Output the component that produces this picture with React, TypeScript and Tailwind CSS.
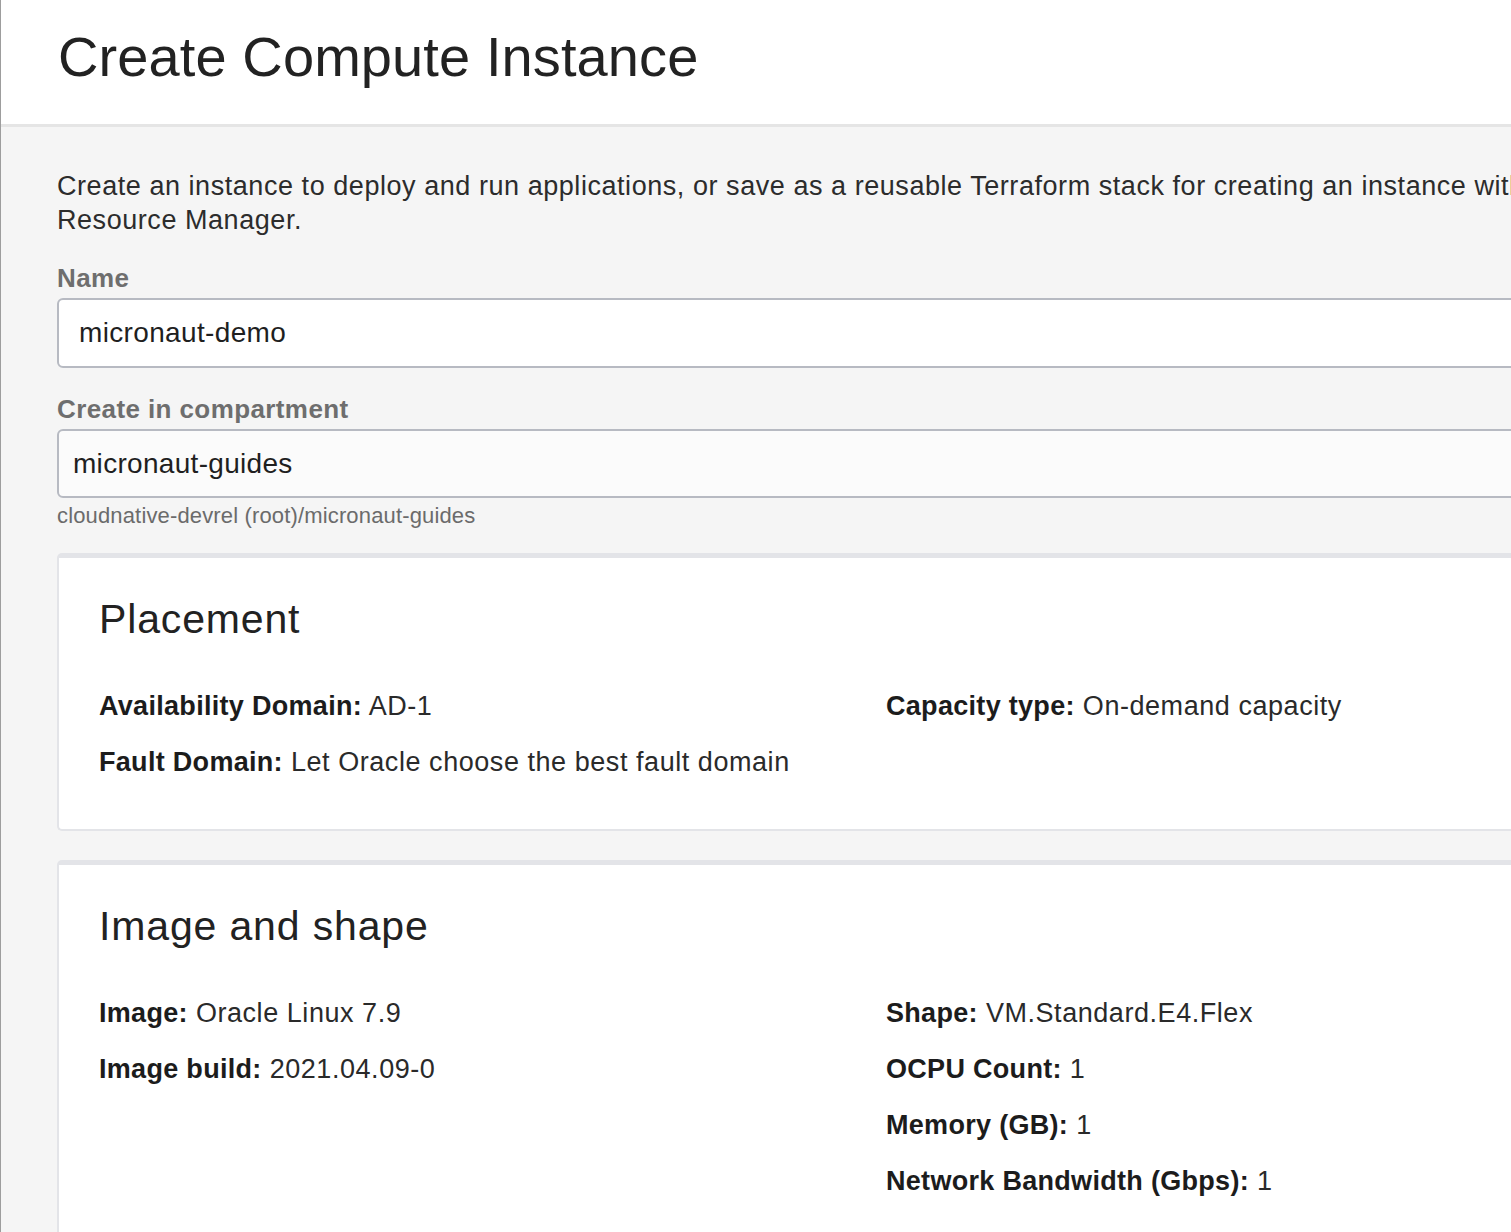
type Field = { label: string; value: string };

const placementLeft: Field[] = [
  { label: "Availability Domain:", value: "AD-1" },
  { label: "Fault Domain:", value: "Let Oracle choose the best fault domain" },
];
const placementRight: Field[] = [{ label: "Capacity type:", value: "On-demand capacity" }];

const imageLeft: Field[] = [
  { label: "Image:", value: "Oracle Linux 7.9" },
  { label: "Image build:", value: "2021.04.09-0" },
];
const imageRight: Field[] = [
  { label: "Shape:", value: "VM.Standard.E4.Flex" },
  { label: "OCPU Count:", value: "1" },
  { label: "Memory (GB):", value: "1" },
  { label: "Network Bandwidth (Gbps):", value: "1" },
];

function FieldList({ items }: { items: Field[] }) {
  return (
    <div className="flex flex-col gap-[22px]">
      {items.map((f) => (
        <div
          key={f.label}
          className="text-[27px] leading-[34px] tracking-[0.55px] text-[#2a2a2a] whitespace-nowrap"
        >
          <span className="font-bold text-[#1c1c1c] tracking-[0.3px]">{f.label}</span> {f.value}
        </div>
      ))}
    </div>
  );
}

function SummaryCard({ title, left, right }: { title: string; left: Field[]; right: Field[] }) {
  return (
    <section className="bg-white border-t-[5px] border-l-2 border-b-2 border-[#e3e4e8] rounded-[5px] pl-[40px] pt-[41px] pb-[50px]">
      <h2 className="text-[41px] leading-none tracking-[0.85px] text-[#222]">{title}</h2>
      <div className="mt-[49px] grid grid-cols-[787px_1fr]">
        <FieldList items={left} />
        <FieldList items={right} />
      </div>
    </section>
  );
}

export default function App() {
  return (
    <div className="min-h-screen overflow-hidden bg-[#f5f5f5] border-l border-[#9d9d9d] font-['Liberation_Sans',Arial,sans-serif]">
      <header className="h-[127px] bg-white border-b-[3px] border-[#e5e5e5] pl-[57px] pt-[29px]">
        <h1 className="text-[56px] leading-none tracking-[0.1px] text-[#222]">Create Compute Instance</h1>
      </header>

      <main className="w-[1700px] pl-[56px] pb-10">
        <p className="mt-[42px] text-[27px] leading-[34px] tracking-[0.55px] text-[#2c2c2c] whitespace-nowrap">
          Create an instance to deploy and run applications, or save as a reusable Terraform stack for creating an instance with
          <br />
          Resource Manager.
        </p>

        <label className="block mt-[25px] text-[26px] leading-[32px] tracking-[0.4px] font-bold text-[#6e6e6e]">
          Name
        </label>
        <div className="mt-[4px] h-[70px] flex items-center bg-white border-2 border-[#b7bac2] rounded-[6px] pl-[20px] text-[28px] tracking-[0.35px] text-[#1f1f1f]">
          micronaut-demo
        </div>

        <label className="block mt-[25px] text-[26px] leading-[32px] tracking-[0.4px] font-bold text-[#6e6e6e]">
          Create in compartment
        </label>
        <div className="mt-[4px] h-[69px] flex items-center bg-[#fbfbfb] border-2 border-[#b7bac2] rounded-[6px] pl-[14px] text-[28px] tracking-[0.3px] text-[#1f1f1f]">
          micronaut-guides
        </div>
        <div className="mt-[4px] text-[22px] leading-[28px] tracking-[0.15px] text-[#6b6b6b]">
          cloudnative-devrel (root)/micronaut-guides
        </div>

        <div className="mt-[23px] flex flex-col gap-[29px]">
          <SummaryCard title="Placement" left={placementLeft} right={placementRight} />
          <SummaryCard title="Image and shape" left={imageLeft} right={imageRight} />
        </div>
      </main>
    </div>
  );
}
